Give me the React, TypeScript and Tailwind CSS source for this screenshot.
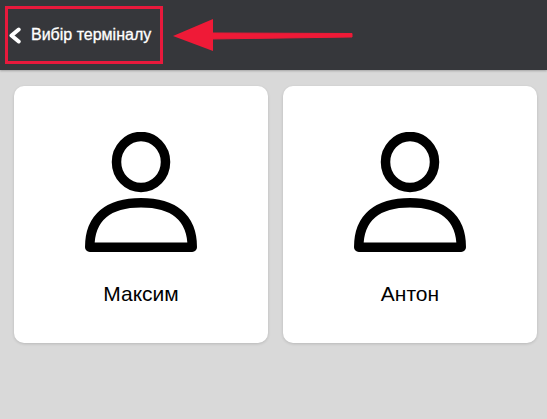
const users = ["Максим", "Антон"];

const UserIcon = () => (
  <svg width="112" height="120" viewBox="0 0 112 120" fill="none" stroke="#000" strokeWidth="9.5" strokeLinejoin="round">
    <ellipse cx="56" cy="30" rx="24.5" ry="25.5" />
    <path d="M4.75 115.25C4.75 85 24 70.75 56 70.75C88 70.75 107.25 85 107.25 115.25Z" />
  </svg>
);

const BackChevron = () => (
  <svg width="12" height="17" viewBox="0 0 12 17" fill="none" stroke="#fff" strokeWidth="4" strokeLinecap="round" strokeLinejoin="round">
    <path d="M9.7 2.5L2.5 8.5L9.7 14.5" />
  </svg>
);

export default function App() {
  return (
    <div className="relative min-h-[419px] bg-[#d9d9d9] font-['Liberation_Sans',Arial,sans-serif]">
      <header className="flex h-[70px] items-center bg-[#36373b] pl-[9px] shadow-[0_1px_2px_rgba(0,0,0,0.25)]">
        <BackChevron />
        <span className="ml-[10px] text-[16px] text-white [-webkit-text-stroke:0.3px_#fff]">
          Вибір терміналу
        </span>
      </header>

      <div className="grid grid-cols-[254px_254px] gap-[15px] pl-[14px] pt-[16px]">
        {users.map((name) => (
          <div
            key={name}
            className="flex h-[257px] flex-col items-center rounded-[10px] bg-white pt-[46px] shadow-[0_1px_3px_rgba(0,0,0,0.15)]"
          >
            <UserIcon />
            <div className="mt-[28px] text-[21px] leading-[28px] text-black">{name}</div>
          </div>
        ))}
      </div>

      {/* red annotation drawn over the screenshot */}
      <div className="absolute left-[5px] top-[6px] h-[58px] w-[158px] border-[3px] border-[#e8193c]" />
      <svg className="absolute left-[170px] top-[15px]" width="190" height="40" viewBox="0 0 190 40">
        <path d="M3 21L43 4L43 36Z" fill="#ef1a37" />
        <path d="M40 18L182 18.5L182 22L40 24Z" fill="#ef1a37" stroke="#ef1a37" strokeLinejoin="round" />
      </svg>
    </div>
  );
}
